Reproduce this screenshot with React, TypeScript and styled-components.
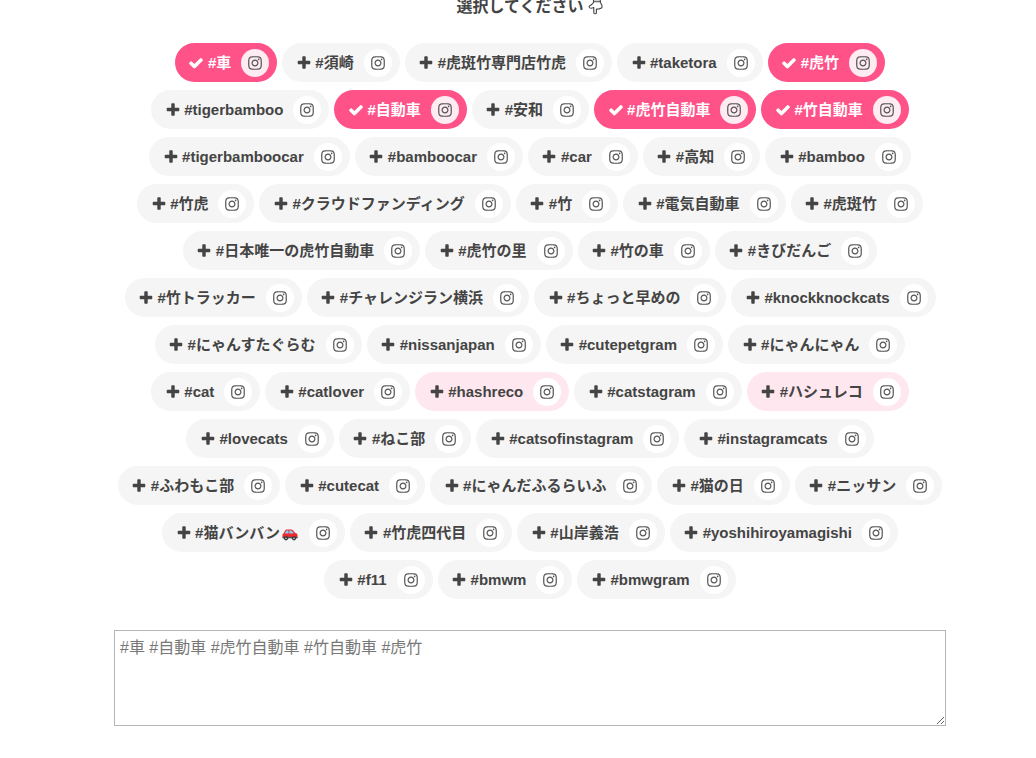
import React, { useState } from "react";
import styled, { createGlobalStyle } from "styled-components";

const GlobalStyle = createGlobalStyle`
  * { box-sizing: border-box; }
  body {
    margin: 0;
    background: #fff;
    color: #444;
    font-family: "Liberation Sans", "Noto Sans CJK JP", sans-serif;
    font-size: 15px;
  }
`;

const Page = styled.main`
  padding: 0 90px 32px 114px;
`;

const Lead = styled.p`
  display: flex;
  justify-content: center;
  align-items: center;
  gap: 4px;
  height: 16px;
  margin: 0 0 27px;
  padding-bottom: 2px;
  font-size: 16px;
  line-height: 16px;
  font-weight: bold;
`;

const TagList = styled.ul`
  display: flex;
  flex-wrap: wrap;
  justify-content: center;
  gap: 8px 5px;
  margin: 0 0 31px;
  padding: 0;
  list-style: none;
`;

type Tone = "plain" | "picked" | "promo";

const toneColor: Record<Tone, string> = {
  plain: "#f5f5f5",
  picked: "#ff5289",
  promo: "#ffe7ef",
};

const Pill = styled.li<{ $tone: Tone }>`
  display: flex;
  align-items: center;
  height: 39px;
  padding-right: 8px;
  border-radius: 20px;
  background: ${(p) => toneColor[p.$tone]};
  color: ${(p) => (p.$tone === "picked" ? "#fff" : "#444")};
`;

const Toggle = styled.button`
  display: flex;
  align-items: center;
  height: 39px;
  padding: 0 10px 0 15px;
  border: 0;
  background: none;
  color: inherit;
  font: inherit;
  font-weight: bold;
  line-height: 20px;
  white-space: nowrap;
  cursor: pointer;
`;

const Mark = styled.span`
  display: flex;
  justify-content: center;
  width: 13px;
  margin-right: 5px;
`;

const InstaLink = styled.a<{ $picked: boolean }>`
  display: flex;
  align-items: center;
  justify-content: center;
  width: 28px;
  height: 28px;
  border-radius: 50%;
  background: ${(p) => (p.$picked ? "#ffebf2" : "#fff")};
  color: #555;
`;

const Glyph = styled.svg`
  display: block;
  flex: none;
  fill: currentColor;
`;

const CarIcon = styled.svg`
  display: block;
  margin: 4px 1px 0 2px;
`;

const Output = styled.textarea`
  display: block;
  width: 100%;
  height: 96px;
  padding: 5px;
  border: 1px solid #b5b5b5;
  border-radius: 0;
  background: #fff;
  color: #777;
  font: inherit;
  font-size: 16px;
  line-height: 24px;
  resize: both;
`;

const PLUS =
  "M1600 736v192q0 40-28 68t-68 28h-416v416q0 40-28 68t-68 28h-192q-40 0-68-28t-28-68v-416h-416q-40 0-68-28t-28-68v-192q0-40 28-68t68-28h416v-416q0-40 28-68t68-28h192q40 0 68 28t28 68v416h416q40 0 68 28t28 68z";
const CHECK =
  "M1671 566q0 40-28 68l-724 724-136 136q-28 28-68 28t-68-28l-136-136-362-362q-28-28-28-68t28-68l136-136q28-28 68-28t68 28l294 295 656-657q28-28 68-28t68 28l136 136q28 28 28 68z";
const INSTAGRAM =
  "M1152 896q0-106-75-181t-181-75-181 75-75 181 75 181 181 75 181-75 75-181zm138 0q0 164-115 279t-279 115-279-115-115-279 115-279 279-115 279 115 115 279zm108-410q0 38-27 65t-65 27-65-27-27-65 27-65 65-27 65 27 27 65zm-502-220q-7 0-76.500-.5t-105.500 0-96.500 3-103 10-71.500 18.500q-50 20-88 58t-58 88q-11 29-18.500 71.500t-10 103-3 96.500 0 105.500.5 76.500-.5 76.500 0 105.500 3 96.500 10 103 18.500 71.500q20 50 58 88t88 58q29 11 71.500 18.500t103 10 96.500 3 105.500 0 76.500-.5 76.500.5 105.500 0 96.500-3 103-10 71.500-18.500q50-20 88-58t58-88q11-29 18.500-71.500t10-103 3-96.500 0-105.500-.5-76.500.5-76.500 0-105.500-3-96.500-10-103-18.500-71.500q-20-50-58-88t-88-58q-29-11-71.500-18.500t-103-10-96.500-3-105.500 0-76.500.5zm768 630q0 229-5 317-10 208-124 322t-322 124q-88 5-317 5t-317-5q-208-10-322-124t-124-322q-5-88-5-317t5-317q10-208 124-322t322-124q88-5 317-5t317 5q208 10 322 124t124 322q5 88 5 317z";

const tags = [
  "車", "須崎", "虎斑竹専門店竹虎", "taketora", "虎竹",
  "tigerbamboo", "自動車", "安和", "虎竹自動車", "竹自動車",
  "tigerbamboocar", "bamboocar", "car", "高知", "bamboo",
  "竹虎", "クラウドファンディング", "竹", "電気自動車", "虎斑竹",
  "日本唯一の虎竹自動車", "虎竹の里", "竹の車", "きびだんご",
  "竹トラッカー", "チャレンジラン横浜", "ちょっと早めの", "knockknockcats",
  "にゃんすたぐらむ", "nissanjapan", "cutepetgram", "にゃんにゃん",
  "cat", "catlover", "hashreco", "catstagram", "ハシュレコ",
  "lovecats", "ねこ部", "catsofinstagram", "instagramcats",
  "ふわもこ部", "cutecat", "にゃんだふるらいふ", "猫の日", "ニッサン",
  "猫バンバン", "竹虎四代目", "山岸義浩", "yoshihiroyamagishi",
  "f11", "bmwm", "bmwgram",
];
const promoted = ["hashreco", "ハシュレコ"];
const withCar = "猫バンバン";

function HandDown() {
  return (
    <svg width="16" height="16" viewBox="0 0 16 16" fill="none" stroke="#444" strokeWidth="1.1" strokeLinejoin="round" strokeLinecap="round" aria-hidden="true">
      <path d="M5.5 0.600h6.800v2.600c.3 1 1.300 2 1.700 3.600.3 1.800-.6 2.700-2 2.500-.6.800-1.400.9-2.100.5-.4.400-.9.500-1.500.3v3.300c0 1.900-2.600 1.900-2.600 0V8.600C4.300 9.100 2.800 9.600 1.800 8.900.8 8.100 1.100 7 2.200 6.600 3.800 6 4.500 4.600 5.500 3.500z" />
      <path d="M5.500 2.800h6.800" />
    </svg>
  );
}

function Car() {
  return (
    <CarIcon width="16" height="12" viewBox="0 0 16 12" role="img" aria-label="車">
      <path d="M.5 8V5.500Q.5 4.600 1.500 4.400L3.300 1.300Q3.700.5 4.700.5h4.600q.8 0 1.400.6l2.500 3q2.300.3 2.300 1.800V9H1z" fill="#f0282d" />
      <path d="M2.800 4.400 4.100 1.900q.2-.4.6-.4h1.800v2.900zM7.300 1.500h1.900q.4 0 .7.300l2 2.600H7.300z" fill="#7fd0f5" />
      <path d="M.5 7.800h15v1.500H.5z" fill="#4a4f5c" />
      <circle cx="4" cy="9.300" r="2.100" fill="#333" />
      <circle cx="12" cy="9.300" r="2.100" fill="#333" />
      <circle cx="4" cy="9.300" r=".9" fill="#bbb" />
      <circle cx="12" cy="9.300" r=".9" fill="#bbb" />
    </CarIcon>
  );
}

export default function App() {
  const [picked, setPicked] = useState(["車", "自動車", "虎竹自動車", "竹自動車", "虎竹"]);

  const toggle = (tag: string) =>
    setPicked((now) => (now.includes(tag) ? now.filter((t) => t !== tag) : [...now, tag]));

  return (
    <>
      <GlobalStyle />
      <Page lang="ja">
        <Lead>
          選択してください
          <HandDown />
        </Lead>
        <TagList>
          {tags.map((tag) => {
            const on = picked.includes(tag);
            const tone: Tone = on ? "picked" : promoted.includes(tag) ? "promo" : "plain";
            return (
              <Pill key={tag} $tone={tone}>
                <Toggle type="button" aria-pressed={on} onClick={() => toggle(tag)}>
                  <Mark>
                    <Glyph width="16" height="16" viewBox="0 0 1792 1792" aria-hidden="true">
                      <path d={on ? CHECK : PLUS} />
                    </Glyph>
                  </Mark>
                  #{tag}
                  {tag === withCar && <Car />}
                </Toggle>
                <InstaLink $picked={on} href={"#" + tag} aria-label={"Instagram #" + tag}>
                  <Glyph width="16" height="16" viewBox="0 0 1792 1792" aria-hidden="true">
                    <path d={INSTAGRAM} />
                  </Glyph>
                </InstaLink>
              </Pill>
            );
          })}
        </TagList>
        <Output
          aria-label="ハッシュタグ"
          readOnly
          value={picked.map((t) => "#" + t).join(" ")}
        />
      </Page>
    </>
  );
}
